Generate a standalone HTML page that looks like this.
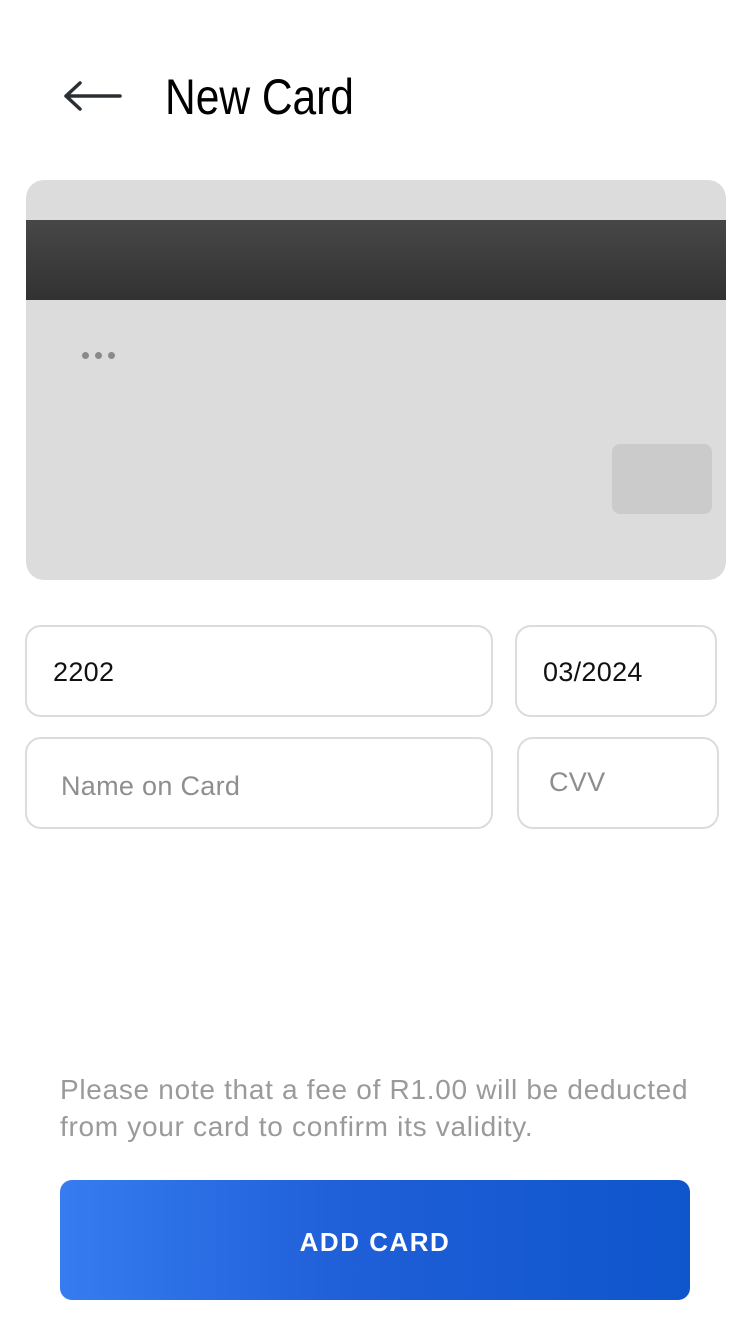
<!DOCTYPE html>
<html><head><style>
body{margin:0;width:750px;height:1334px;background:#fff;position:relative;font-family:"Liberation Sans",sans-serif;overflow:hidden}
.a{position:absolute}
.inp{position:absolute;border:2px solid #dcdcdc;border-radius:16px;box-sizing:border-box;font-size:27px;padding-left:26px;display:flex;align-items:center;letter-spacing:0.3px}
</style></head><body>
<svg class="a" style="left:60px;top:76px" width="64" height="40" viewBox="0 0 64 40"><path d="M60 20H6M20 7L6 20L20 33" fill="none" stroke="#2a2f33" stroke-width="3.5" stroke-linecap="round" stroke-linejoin="round"/></svg>
<div class="a" style="left:165px;top:68px;font-size:50px;color:#000;transform:scaleX(0.85);transform-origin:left top;white-space:nowrap">New Card</div>
<div class="a" style="left:26px;top:180px;width:700px;height:400px;background:#dcdcdc;border-radius:18px;overflow:hidden">
 <div class="a" style="left:0;top:40px;width:700px;height:80px;background:linear-gradient(#474747,#323232)"></div>
 <div class="a" style="left:56px;top:172px;width:7px;height:7px;border-radius:50%;background:#8a8a8a"></div>
 <div class="a" style="left:69px;top:172px;width:7px;height:7px;border-radius:50%;background:#8a8a8a"></div>
 <div class="a" style="left:82px;top:172px;width:7px;height:7px;border-radius:50%;background:#8a8a8a"></div>
 <div class="a" style="left:586px;top:264px;width:100px;height:70px;background:#cbcbcb;border-radius:8px"></div>
</div>
<div class="inp" style="left:25px;top:625px;width:468px;height:92px;color:#111;padding-top:2px">2202</div>
<div class="inp" style="left:515px;top:625px;width:202px;height:92px;color:#111;padding-top:2px">03/2024</div>
<div class="inp" style="left:25px;top:737px;width:468px;height:92px;color:#8e8e8e;padding-left:34px;padding-top:6px">Name on Card</div>
<div class="inp" style="left:517px;top:737px;width:202px;height:92px;color:#8e8e8e;padding-left:30px;padding-bottom:2px">CVV</div>
<div class="a" style="left:60px;top:1071px;width:680px;font-size:28px;line-height:37px;color:#9a9a9a;letter-spacing:0.7px;white-space:nowrap">Please note that a fee of R1.00 will be deducted<br>from your card to confirm its validity.</div>
<div class="a" style="left:60px;top:1180px;width:630px;height:120px;border-radius:12px;background:linear-gradient(90deg,#367cf0,#1f5fd8 45%,#0f55cc);color:#fff;font-size:26px;font-weight:bold;letter-spacing:1.5px;display:flex;align-items:center;justify-content:center;padding-top:4px;box-sizing:border-box">ADD CARD</div>
</body></html>
